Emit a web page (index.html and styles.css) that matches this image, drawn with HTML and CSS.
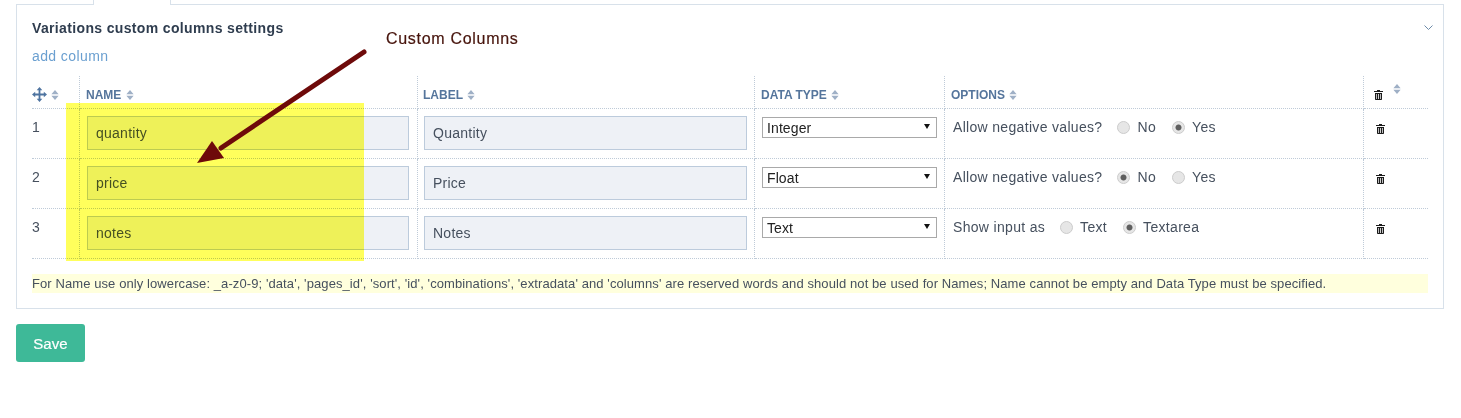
FILE: index.html
```html
<!DOCTYPE html>
<html lang="en">
<head>
<meta charset="utf-8">
<title>Variations custom columns settings</title>
<link rel="stylesheet" href="styles.css">
</head>
<body>
<svg class="defs" width="0" height="0" aria-hidden="true">
  <symbol id="sort" viewBox="0 0 8 11"><path d="M4 0 8 4.600H0ZM4 11 0 6.400H8Z"/></symbol>
  <symbol id="trash" viewBox="0 0 9 10"><path d="M3 0H6V1H9V2H0V1H3ZM1 3H8V9.200Q8 10 7.200 10H1.800Q1 10 1 9.200ZM2.200 4V9H2.900V4ZM4.100 4V9H4.900V4ZM6.100 4V9H6.800V4Z" fill-rule="evenodd"/></symbol>
</svg>
<main class="page">
  <div class="tabs"><span class="tab"></span></div>
  <section class="panel">
    <header class="panel-head">
      <h2 class="panel-title">Variations custom columns settings</h2>
      <svg class="chevron" width="9" height="5" viewBox="0 0 9 5"><path d="M.5.5 4.500 4.500 8.500.5" fill="none" stroke="#6c8aa8" stroke-width="1"/></svg>
    </header>
    <a class="add-link" href="#">add column</a>
    <table class="grid">
      <colgroup><col class="c1"><col class="c2"><col class="c3"><col class="c4"><col class="c5"><col class="c6"></colgroup>
      <thead>
        <tr>
          <th class="th-move">
            <svg class="move" width="15" height="15" viewBox="0 0 15 15"><path d="M7.500 0 10.300 3.200H8.400V6.600H11.800V4.700L15 7.500 11.800 10.300V8.400H8.400V11.800H10.300L7.500 15 4.700 11.800H6.600V8.400H3.200V10.300L0 7.500 3.200 4.700V6.600H6.600V3.200H4.700Z"/></svg>
            <svg class="sort"><use href="#sort"/></svg>
          </th>
          <th>NAME <svg class="sort"><use href="#sort"/></svg></th>
          <th class="th-label">LABEL <svg class="sort"><use href="#sort"/></svg></th>
          <th>DATA TYPE <svg class="sort"><use href="#sort"/></svg></th>
          <th class="th-options">OPTIONS <svg class="sort"><use href="#sort"/></svg></th>
          <th class="th-del">
            <svg class="trash"><use href="#trash"/></svg>
            <svg class="sort sort-raised"><use href="#sort"/></svg>
          </th>
        </tr>
      </thead>
      <tbody>
        <tr>
          <td class="num">1</td>
          <td class="name"><input class="text" value="quantity"></td>
          <td class="label"><input class="text" value="Quantity"></td>
          <td class="type"><select class="pick"><option>Integer</option><option>Float</option><option>Text</option></select></td>
          <td class="opts"><div class="opt-row"><span>Allow negative values?</span>
            <label class="radio"><input type="radio" name="r1">No</label>
            <label class="radio"><input type="radio" name="r1" checked>Yes</label></div></td>
          <td class="del"><svg class="trash"><use href="#trash"/></svg></td>
        </tr>
        <tr>
          <td class="num">2</td>
          <td class="name"><input class="text" value="price"></td>
          <td class="label"><input class="text" value="Price"></td>
          <td class="type"><select class="pick"><option>Float</option><option>Integer</option><option>Text</option></select></td>
          <td class="opts"><div class="opt-row"><span>Allow negative values?</span>
            <label class="radio"><input type="radio" name="r2" checked>No</label>
            <label class="radio"><input type="radio" name="r2">Yes</label></div></td>
          <td class="del"><svg class="trash"><use href="#trash"/></svg></td>
        </tr>
        <tr>
          <td class="num">3</td>
          <td class="name"><input class="text" value="notes"></td>
          <td class="label"><input class="text" value="Notes"></td>
          <td class="type"><select class="pick"><option>Text</option><option>Integer</option><option>Float</option></select></td>
          <td class="opts"><div class="opt-row"><span>Show input as</span>
            <label class="radio"><input type="radio" name="r3">Text</label>
            <label class="radio"><input type="radio" name="r3" checked>Textarea</label></div></td>
          <td class="del"><svg class="trash"><use href="#trash"/></svg></td>
        </tr>
      </tbody>
    </table>
    <p class="note">For Name use only lowercase: _a-z0-9; 'data', 'pages_id', 'sort', 'id', 'combinations', 'extradata' and 'columns' are reserved words and should not be used for Names; Name cannot be empty and Data Type must be specified.</p>
  </section>
  <button class="save" type="button">Save</button>
  <div class="highlight"></div>
  <svg class="arrow" width="180" height="125" viewBox="0 0 180 125"><path d="M167 12 24 108" stroke="#6e0a0a" stroke-width="5" stroke-linecap="round"/><path d="M0 123 15 101 27 118Z" fill="#6e0a0a"/></svg>
  <div class="callout">Custom Columns</div>
</main>
</body>
</html>
```
FILE: styles.css
```css
* { box-sizing: border-box; }
html, body { margin: 0; background: #fff; }
body { font-family: "Liberation Sans", Arial, sans-serif; font-size: 14px; letter-spacing: .32px; color: #354052; height: 418px; overflow: hidden; }
.defs { position: absolute; }
.page { position: relative; padding: 0 17px 0 16px; }

.tabs { display: flex; height: 5px; padding-left: 77px; margin-bottom: -1px; }
.tab { position: relative; z-index: 1; width: 78px; height: 5px; background: #fff; border: 1px solid #d8e1ea; border-width: 0 1px; }

.panel { border: 1px solid #d8e1ea; padding: 13px 15px 14px; height: 305px; }
.panel-head { display: flex; justify-content: space-between; align-items: center; height: 20px; }
.panel-title { margin: 0; font-size: 14px; line-height: 20px; font-weight: 700; letter-spacing: .35px; color: #2f3d4f; }
.chevron { margin: 0 -5px 2px 0; }
.add-link { display: block; margin-top: 8px; line-height: 20px; letter-spacing: .4px; color: #6a9fd0; text-decoration: none; }

.grid { width: 1396px; margin-top: 10px; border-collapse: separate; border-spacing: 0; table-layout: fixed; }
.c1 { width: 48px; } .c2 { width: 338px; } .c3 { width: 337px; } .c4 { width: 190px; } .c5 { width: 419px; } .c6 { width: 64px; }
.grid th, .grid td { padding: 0; border-bottom: 1px dotted #bfcbd8; border-right: 1px dotted #bfcbd8; vertical-align: top; }
.grid th:last-child, .grid td:last-child { border-right: 0; }
.grid th { height: 33px; padding: 12px 0 0 6px; text-align: left; font-size: 12px; line-height: 14px; font-weight: 700; letter-spacing: 0; color: #55759c; white-space: nowrap; }
.grid td { height: 50px; }
.grid .th-label { padding-left: 5px; }
.grid .th-move { padding: 11px 0 0; }
.grid .th-del { padding: 0 0 0 10px; position: relative; }

.sort { width: 8px; height: 10px; fill: #9fb0c6; vertical-align: -1px; margin-left: 1px; }
.sort-raised { position: absolute; left: 28px; top: 8px; }
.move { fill: #4f74a0; width: 15px; height: 15px; vertical-align: -3px; }
.trash { width: 9px; height: 10px; fill: #1c1c1c; }
.th-del > .trash { margin-top: 14px; }
.del .trash { display: block; }

.num { padding-top: 8px !important; line-height: 20px; color: #46505e; }
.name { padding: 7px 8px 0 7px !important; }
.label { padding: 7px 7px 0 6px !important; }
.type { padding: 8px 7px 0 7px !important; }
.opts { padding: 8px 0 0 8px !important; }
.del { padding: 15px 0 0 12px !important; }

.text { display: block; width: 100%; height: 34px; padding: 0 8px; border: 1px solid #bccbdc; border-radius: 0; background: #eef1f6; font: 14px "Liberation Sans", Arial, sans-serif; letter-spacing: .25px; color: #46505e; outline: 0; }
.pick { display: block; width: 100%; height: 21px; padding: 0 0 0 4px; border: 1px solid #a9a9a9; border-radius: 0; appearance: none; background: #fff url("data:image/svg+xml,%3Csvg xmlns='http://www.w3.org/2000/svg' width='6' height='5'%3E%3Cpath d='M0 0H6L3 5Z' fill='%23111'/%3E%3C/svg%3E") no-repeat right 6px top 6px; font: 14px "Liberation Sans", Arial, sans-serif; letter-spacing: .1px; color: #222; }

.opt-row { display: flex; align-items: center; height: 20px; line-height: 20px; color: #46505e; }
.radio { display: flex; align-items: center; margin-left: 15px; }
.radio + .radio { margin-left: 16px; }
.radio input { appearance: none; width: 13px; height: 13px; margin: 0 7px 0 0; border-radius: 50%; border: 1px solid #ccc; background: #e6e6e6; }
.radio input:checked { background: radial-gradient(circle, #5f5f5f 0, #5f5f5f 2.6px, #e6e6e6 3.4px); }

.note { margin: 15px 0 0; height: 19px; line-height: 19px; font-size: 13px; letter-spacing: .09px; color: #46505e; background: #ffffdd; white-space: nowrap; }

.save { display: block; width: 69px; height: 38px; margin: 15px 0 0; padding: 0; border: 0; border-radius: 3px; background: #3eb998; color: #fff; font: 15px "Liberation Sans", Arial, sans-serif; letter-spacing: .1px; -webkit-text-stroke: .2px #fff; }

.highlight { position: absolute; left: 66px; top: 103px; width: 298px; height: 158px; background: #ffff5c; mix-blend-mode: multiply; pointer-events: none; }
.arrow { position: absolute; left: 197px; top: 40px; }
.callout { position: absolute; left: 386px; top: 30px; line-height: 18px; font-size: 16px; letter-spacing: .7px; color: #47140c; -webkit-text-stroke: .2px #47140c; }
```
